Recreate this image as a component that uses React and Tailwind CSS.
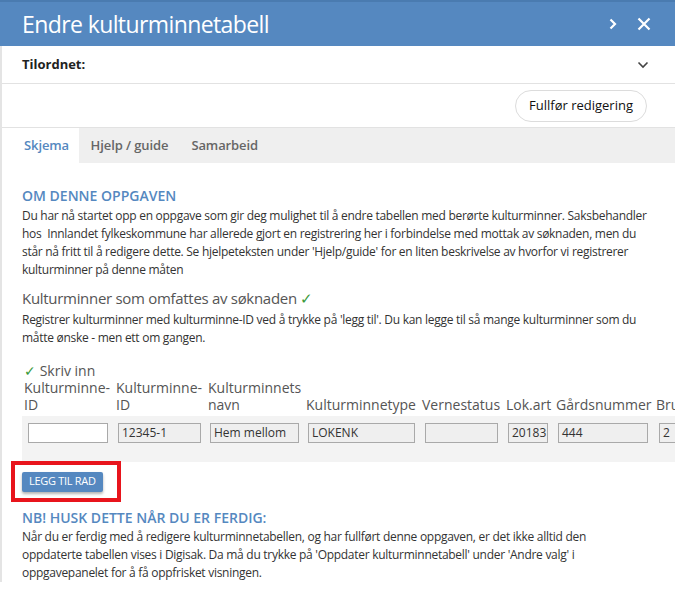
import React from 'react';

const cols = [
  { w: 'w-[92px]', head: ['✓ Skriv inn', 'Kulturminne-', 'ID'], value: '', editable: true, input: 'w-[80px]', pad: 'pl-[6px]' },
  { w: 'w-[92px]', head: ['Kulturminne-', 'ID'], value: '12345-1', input: 'w-[83px]', pad: 'pl-[4px]' },
  { w: 'w-[98px]', head: ['Kulturminnets', 'navn'], value: 'Hem mellom', input: 'w-[89px]', pad: 'pl-[4px]' },
  { w: 'w-[116px]', head: ['Kulturminnetype'], value: 'LOKENK', input: 'w-[107px]', pad: 'pl-[4px]' },
  { w: 'w-[84px]', head: ['Vernestatus'], value: '', input: 'w-[73px]', pad: 'pl-[5px]' },
  { w: 'w-[50px]', head: ['Lok.art'], value: '20183', input: 'w-[40px]', pad: 'pl-[4px]' },
  { w: 'w-[100px]', head: ['Gårdsnummer'], value: '444', input: 'w-[90px]', pad: 'pl-[4px]' },
  { w: 'w-[100px]', head: ['Bruksnummer'], value: '2', input: 'w-[60px]', pad: 'pl-[5px]' },
];

function HeadCell({ lines }) {
  return (
    <div className="flex flex-col justify-end text-[14px] leading-[17px] text-[#555]">
      {lines.map((l, i) =>
        l.startsWith('✓') ? (
          <span key={i} className="whitespace-nowrap">
            <span className="text-[#3a9a3a]">✓</span>
            {l.slice(1)}
          </span>
        ) : (
          <span key={i} className="whitespace-nowrap">{l}</span>
        )
      )}
    </div>
  );
}

export default function App() {
  return (
    <div className="w-[675px] h-[605px] overflow-hidden bg-white text-[#333]" style={{ fontFamily: '"Open Sans", sans-serif' }}>
      {/* header */}
      <div className="h-[46px] bg-[#5588c0] border-t-2 border-[#4a7bb0] flex items-center pl-[22px] pr-[24px]">
        <h1 className="text-white text-[23px] tracking-[-0.6px] flex-1">Endre kulturminnetabell</h1>
        <svg width="8" height="12" viewBox="0 0 8 12" className="mr-[20px]">
          <path d="M1.5 1.5 L6 6 L1.5 10.5" stroke="white" strokeWidth="2.2" fill="none" />
        </svg>
        <svg width="14" height="14" viewBox="0 0 14 14">
          <path d="M1.5 1.5 L12.5 12.5 M12.5 1.5 L1.5 12.5" stroke="white" strokeWidth="2.2" fill="none" />
        </svg>
      </div>

      <div className="border-l-2 border-[#e4e4e4]">
        {/* Tilordnet */}
        <div className="h-[38px] flex items-center pl-[20px] pr-[26px] border-b border-[#e2e2e2]">
          <span className="flex-1 text-[13px] font-bold text-[#222]">Tilordnet:</span>
          <svg width="12" height="8" viewBox="0 0 12 8">
            <path d="M1.5 1.5 L6 6 L10.5 1.5" stroke="#444" strokeWidth="1.6" fill="none" />
          </svg>
        </div>

        {/* action */}
        <div className="h-[44px] flex items-center justify-end pr-[28px] border-b border-[#e2e2e2]">
          <button className="h-[32px] px-[13px] rounded-full border border-[#dcdcdc] text-[13px] text-[#111] bg-white">
            Fullfør redigering
          </button>
        </div>

        {/* tabs */}
        <div className="h-[35px] bg-[#efefef] flex text-[13px] font-semibold tracking-[-0.1px]">
          <div className="bg-white pl-[22px] pr-[10px] flex items-center text-[#5588c0]">Skjema</div>
          <div className="px-[11.5px] flex items-center text-[#666]">Hjelp / guide</div>
          <div className="px-[11.5px] flex items-center text-[#666]">Samarbeid</div>
        </div>

        {/* content */}
        <div className="pl-[20px] pt-[22px]">
          <h2 className="text-[14px] font-semibold text-[#5588c0] leading-[22px]">OM DENNE OPPGAVEN</h2>
          <p className="text-[12px] leading-[18px] tracking-[-0.28px] whitespace-nowrap">
            Du har nå startet opp en oppgave som gir deg mulighet til å endre tabellen med berørte kulturminner. Saksbehandler<br />
            hos&nbsp; Innlandet fylkeskommune har allerede gjort en registrering her i forbindelse med mottak av søknaden, men du<br />
            står nå fritt til å redigere dette. Se hjelpeteksten under 'Hjelp/guide' for en liten beskrivelse av hvorfor vi registrerer<br />
            kulturminner på denne måten
          </p>

          <h3 className="mt-[8px] text-[15px] tracking-[-0.3px] text-[#555] leading-[22px]">
            Kulturminner som omfattes av søknaden <span className="text-[#3a9a3a]">✓</span>
          </h3>
          <p className="mt-[2px] text-[12px] leading-[18px] tracking-[-0.28px] whitespace-nowrap">
            Registrer kulturminner med kulturminne-ID ved å trykke på 'legg til'. Du kan legge til så mange kulturminner som du<br />
            måtte ønske - men ett om gangen.
          </p>

          {/* table */}
          <div className="mt-[12px] flex">
            {cols.map((c, i) => (
              <div key={i} className={`${c.w} shrink-0 h-[55px] flex items-end pl-[2px] pb-[1px]`}>
                <HeadCell lines={c.head} />
              </div>
            ))}
          </div>
          <div className="mt-[2px] flex bg-[#f3f3f3] h-[46px] pt-[7px] w-max">
            {cols.map((c, i) => (
              <div key={i} className={`${c.w} shrink-0 ${c.pad}`}>
                <div
                  className={`${c.input} h-[20px] border border-[#a9a9a9] text-[12px] leading-[18px] px-[3px] text-[#333] whitespace-nowrap overflow-hidden ${c.editable ? 'bg-white' : 'bg-[#efefef]'}`}
                >
                  {c.value}
                </div>
              </div>
            ))}
          </div>

          {/* add row */}
          <div className="-ml-[11px] mt-[-1px] w-[110px] h-[41px] border-[4px] border-[#e8141c] flex items-center pl-[7px]">
            <button className="h-[20px] px-[7px] bg-[#5588c0] text-white text-[11px] tracking-[-0.3px] rounded-[2px] shadow-[0_2px_3px_rgba(0,0,0,0.3)]">
              LEGG TIL RAD
            </button>
          </div>

          <h2 className="mt-[6px] text-[14px] font-semibold text-[#5588c0] leading-[20px]">NB! HUSK DETTE NÅR DU ER FERDIG:</h2>
          <p className="text-[12px] leading-[18px] tracking-[-0.28px] whitespace-nowrap">
            Når du er ferdig med å redigere kulturminnetabellen, og har fullført denne oppgaven, er det ikke alltid den<br />
            oppdaterte tabellen vises i Digisak. Da må du trykke på 'Oppdater kulturminnetabell' under 'Andre valg' i<br />
            oppgavepanelet for å få oppfrisket visningen.
          </p>
        </div>
      </div>
    </div>
  );
}
